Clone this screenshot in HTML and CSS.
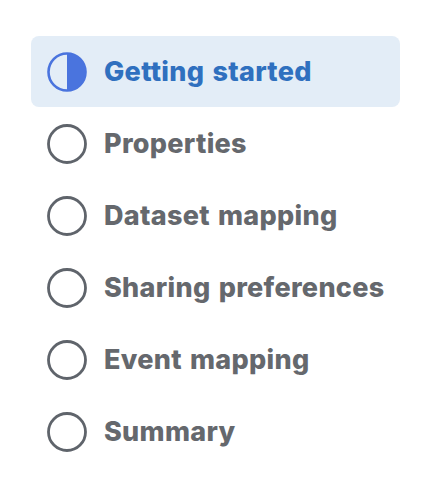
FILE: index.html
```html
<!DOCTYPE html>
<html lang="en">
<head>
  <meta charset="UTF-8" />
  <meta name="viewport" content="width=device-width, initial-scale=1.0"/>
  <title>Setup steps</title>
  <link rel="stylesheet" href="styles.css">
</head>
<body>
  <!-- Steps list -->
  <ul class="steps">
    <li class="step active">
      <svg class="step-icon" viewBox="0 0 40 40">
        <circle cx="20" cy="20" r="18.5" fill="none" stroke="currentColor" stroke-width="2.6"/>
        <path d="M20 1.5 A18.5 18.5 0 0 1 20 38.5 Z" fill="currentColor"/>
      </svg>
      <span>Getting started</span>
    </li>
    <li class="step">
      <svg class="step-icon" viewBox="0 0 40 40"><circle cx="20" cy="20" r="18.5" fill="none" stroke="currentColor" stroke-width="2.8"/></svg>
      <span>Properties</span>
    </li>
    <li class="step">
      <svg class="step-icon" viewBox="0 0 40 40"><circle cx="20" cy="20" r="18.5" fill="none" stroke="currentColor" stroke-width="2.8"/></svg>
      <span>Dataset mapping</span>
    </li>
    <li class="step">
      <svg class="step-icon" viewBox="0 0 40 40"><circle cx="20" cy="20" r="18.5" fill="none" stroke="currentColor" stroke-width="2.8"/></svg>
      <span>Sharing preferences</span>
    </li>
    <li class="step">
      <svg class="step-icon" viewBox="0 0 40 40"><circle cx="20" cy="20" r="18.5" fill="none" stroke="currentColor" stroke-width="2.8"/></svg>
      <span>Event mapping</span>
    </li>
    <li class="step">
      <svg class="step-icon" viewBox="0 0 40 40"><circle cx="20" cy="20" r="18.5" fill="none" stroke="currentColor" stroke-width="2.8"/></svg>
      <span>Summary</span>
    </li>
  </ul>
</body>
</html>
```

FILE: styles.css
```css
* {
  margin: 0;
  padding: 0;
  box-sizing: border-box;
}

body {
  background-color: #fff;
  font-family: Inter, 'Noto Sans', sans-serif;
  padding: 36px 26px 0 31px;
}

.steps {
  list-style: none;
  display: flex;
  flex-direction: column;
  gap: 1px;
}

.step {
  display: flex;
  align-items: center;
  height: 71px;
  padding-left: 16px;
  gap: 17px;
  border-radius: 8px;
  color: #65686d;
  font-size: 27px;
  font-weight: 800;
  letter-spacing: 0.3px;
  word-spacing: 2px;
}

.step-icon {
  width: 40px;
  height: 40px;
  flex-shrink: 0;
  color: #5f646b;
}

.step.active {
  background-color: #e3edf7;
  color: #2f70bf;
}

.step.active .step-icon {
  color: #4a74de;
}
```
